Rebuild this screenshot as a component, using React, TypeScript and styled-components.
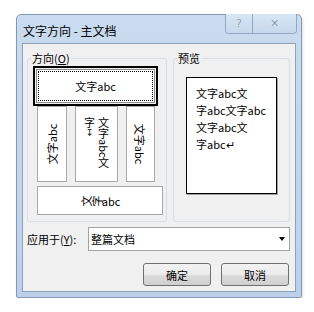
import * as React from 'react'
import styled, { createGlobalStyle } from 'styled-components'

const GlobalStyle = createGlobalStyle`
  html, body { margin: 0; padding: 0; background: #fff; }
  body { font-family: "Noto Sans CJK SC", "Noto Sans", sans-serif; color: #000; }
`

const Page = styled.div`
  padding: 14px 0 0 16px;
`

const Window = styled.div`
  box-sizing: border-box;
  width: 286px;
  height: 284px;
  border: 1px solid #8199b6;
  border-radius: 5px 5px 2px 2px;
  background: linear-gradient(#c9dbee, #bcd1e9);
  padding: 0 5px 5px;
  box-shadow: 1px 2px 3px rgba(0, 0, 0, 0.12);
`

const TitleBar = styled.div`
  height: 28px;
  margin: 0 -5px;
  padding: 0 4px 0 6px;
  display: flex;
  align-items: flex-start;
`

const Title = styled.div`
  font-size: 12px;
  line-height: 16px;
  margin-top: 8px;
`

const Captions = styled.div`
  margin-left: auto;
  margin-top: -1px;
  display: flex;
  height: 19px;
  border: 1px solid #93a8c2;
  border-top: none;
  border-radius: 0 0 4px 4px;
  overflow: hidden;
`

const CaptionButton = styled.div<{ $w: number }>`
  width: ${p => p.$w}px;
  display: flex;
  align-items: center;
  justify-content: center;
  background: linear-gradient(#d8e6f4, #c6d8ec);
  color: #8a9bb0;
  font-size: 11px;
  font-family: "DejaVu Sans", sans-serif;
  text-shadow: 0 0 1px #fff;
  & + & { border-left: 1px solid #93a8c2; }
`

const Client = styled.div`
  box-sizing: border-box;
  height: 249px;
  border: 1px solid #8da2ba;
  background: #f0f0f0;
  padding: 14px 5px 0 4px;
  display: flex;
  flex-direction: column;
`

const GroupRow = styled.div`
  display: flex;
  gap: 6px;
`

const Group = styled.div<{ $w: number; $pad: string }>`
  position: relative;
  box-sizing: border-box;
  width: ${p => p.$w}px;
  height: 164px;
  border: 1px solid #d5dfe5;
  border-radius: 3px;
  padding: ${p => p.$pad};
`

const Legend = styled.span`
  position: absolute;
  top: -9px;
  left: 3px;
  padding: 0 1px;
  background: #f0f0f0;
  font-size: 11px;
  line-height: 16px;
`

const SelectFrame = styled.div`
  box-sizing: border-box;
  width: 125px;
  height: 40px;
  border: 2px solid #000;
  padding: 1px;
`

const SelectedButton = styled.div`
  box-sizing: border-box;
  height: 100%;
  background: #fff;
  border: 1px solid #8e8e8e;
  padding: 1px;
`

const FocusRect = styled.div`
  box-sizing: border-box;
  height: 100%;
  border: 1px dotted #000;
  display: flex;
  align-items: center;
  justify-content: center;
  font-size: 11px;
`

const OptionRow = styled.div`
  display: flex;
  gap: 8px;
  height: 76px;
  margin: 0 3px 0 4px;
`

const OptionBox = styled.div<{ $w?: number }>`
  box-sizing: border-box;
  width: ${p => (p.$w ? `${p.$w}px` : 'auto')};
  height: 100%;
  background: #fff;
  border: 1px solid #a8a8a8;
  display: flex;
  align-items: center;
  justify-content: center;
  overflow: hidden;
  font-size: 11px;
`

const WideBox = styled(OptionBox)`
  height: 29px;
  margin: 4px 3px 0 4px;
`

const Rotated = styled.span<{ $deg: number }>`
  display: inline-block;
  white-space: nowrap;
  transform: rotate(${p => p.$deg}deg);
`

const VerticalText = styled.div`
  writing-mode: vertical-rl;
  height: 52px;
  line-height: 14px;
  align-self: flex-start;
  margin-top: 10px;
`

const Upright = styled.span`
  text-orientation: upright;
  font-family: "DejaVu Sans", sans-serif;
  font-size: 9px;
`

const PreviewBox = styled.div`
  box-sizing: border-box;
  width: 91px;
  height: 117px;
  background: #fff;
  border: 1px solid #000;
  box-shadow: 1px 1px 0 #a0a0a0;
  padding: 7px 0 0 9px;
  font-size: 11px;
  line-height: 17px;
`

const ApplyRow = styled.div`
  display: flex;
  align-items: center;
  margin-top: 5px;
  height: 24px;
`

const ApplyLabel = styled.div`
  width: 61px;
  font-size: 11px;
`

const Combo = styled.div`
  box-sizing: border-box;
  width: 202px;
  height: 24px;
  border: 1px solid #a3a3a3;
  background: #fff;
  display: flex;
  align-items: center;
  padding-left: 2px;
  font-size: 11px;
`

const ComboArrow = styled.span`
  margin-left: auto;
  margin-right: 4px;
  width: 0;
  height: 0;
  border-left: 3.5px solid transparent;
  border-right: 3.5px solid transparent;
  border-top: 4px solid #000;
`

const ButtonRow = styled.div`
  display: flex;
  justify-content: flex-end;
  gap: 10px;
  margin-top: 12px;
  padding-right: 1px;
`

const Button = styled.button`
  box-sizing: border-box;
  width: 68px;
  height: 23px;
  padding: 0;
  border: 1px solid #707070;
  border-radius: 3px;
  background: linear-gradient(#f2f2f2 0%, #ebebeb 50%, #dddddd 51%, #cfcfcf 100%);
  font-family: inherit;
  font-size: 11px;
  color: #000;
`

const App = () => {
  return (
    <>
      <GlobalStyle />
      <Page>
        <Window>
          <TitleBar>
            <Title>文字方向 - 主文档</Title>
            <Captions>
              <CaptionButton $w={26}>?</CaptionButton>
              <CaptionButton $w={43}>✕</CaptionButton>
            </Captions>
          </TitleBar>
          <Client>
            <GroupRow>
              <Group $w={140} $pad="7px 0 0 5px">
                <Legend>方向(<u>O</u>)</Legend>
                <SelectFrame>
                  <SelectedButton>
                    <FocusRect>文字abc</FocusRect>
                  </SelectedButton>
                </SelectFrame>
                <OptionRow>
                  <OptionBox $w={30}>
                    <Rotated $deg={-90}>文字abc</Rotated>
                  </OptionBox>
                  <OptionBox $w={43}>
                    <VerticalText>
                      文字abc文字<Upright>↧</Upright>
                    </VerticalText>
                  </OptionBox>
                  <OptionBox $w={29}>
                    <Rotated $deg={90}>文字abc</Rotated>
                  </OptionBox>
                </OptionRow>
                <WideBox>
                  <Rotated $deg={-90}>文</Rotated>
                  <Rotated $deg={-90}>字</Rotated>
                  abc
                </WideBox>
              </Group>
              <Group $w={117} $pad="18px 0 0 12px">
                <Legend>预览</Legend>
                <PreviewBox>
                  <div>文字abc文</div>
                  <div>字abc文字abc</div>
                  <div>文字abc文</div>
                  <div>字abc↵</div>
                </PreviewBox>
              </Group>
            </GroupRow>
            <ApplyRow>
              <ApplyLabel>应用于(<u>Y</u>):</ApplyLabel>
              <Combo>
                整篇文档
                <ComboArrow />
              </Combo>
            </ApplyRow>
            <ButtonRow>
              <Button>确定</Button>
              <Button>取消</Button>
            </ButtonRow>
          </Client>
        </Window>
      </Page>
    </>
  )
}

export default App
